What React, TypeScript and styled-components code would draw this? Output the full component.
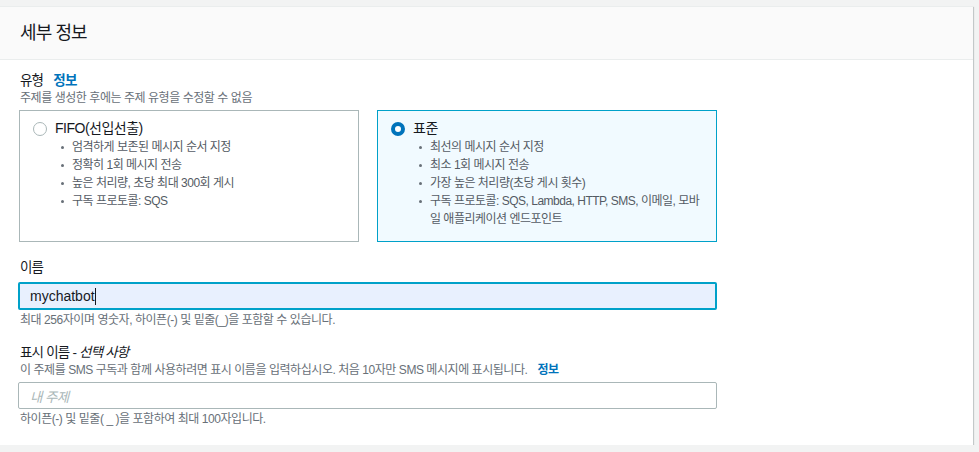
import * as React from 'react';
import styled, { createGlobalStyle } from 'styled-components';

const FONT = `"Liberation Sans", "Noto Sans CJK KR", sans-serif`;

const GlobalStyle = createGlobalStyle`
  body {
    margin: 0;
    background: #f2f3f3;
    font-family: ${FONT};
    color: #16191f;
  }
`;

const Page = styled.div`
  padding: 6px 6px 0 0;
`;

const Card = styled.section`
  background: #fff;
  border-top: 1px solid #eaeded;
  box-shadow: 0 1px 1px 0 rgba(0, 28, 36, 0.3), 1px 1px 1px 0 rgba(0, 28, 36, 0.15),
    -1px 1px 1px 0 rgba(0, 28, 36, 0.15);
`;

const Header = styled.header`
  background: #fafafa;
  border-bottom: 1px solid #eaeded;
  padding: 15px 20px 15px;
`;

const Title = styled.h2`
  margin: 0;
  font-size: 18px;
  font-weight: 400;
  line-height: 22px;
  letter-spacing: -0.9px;
`;

const Body = styled.div`
  padding: 12px 20px 18px 18px;
`;

const Field = styled.div<{ $gap?: number }>`
  margin-top: ${({ $gap }) => $gap || 0}px;
  width: 699px;
`;

const Label = styled.div`
  padding-left: 2px;
  font-size: 13.5px;
  line-height: 18px;
  letter-spacing: -0.8px;
  color: #16191f;

  em {
    font-style: italic;
  }
`;

const Desc = styled.div`
  padding-left: 2px;
  font-size: 12px;
  line-height: 16px;
  letter-spacing: -0.45px;
  color: #687078;
`;

const Info = styled.a`
  margin-left: 10px;
  color: #0073bb;
  font-weight: 700;
  text-decoration: none;
  letter-spacing: -0.6px;
`;

const Tiles = styled.div`
  display: grid;
  grid-template-columns: 1fr 1fr;
  gap: 18px;
  margin-top: 4px;
  padding-left: 1px;
`;

const Tile = styled.div<{ $selected?: boolean }>`
  display: flex;
  gap: 8px;
  height: 132px;
  box-sizing: border-box;
  padding: 8px 12px 0 13px;
  border: 1px solid ${({ $selected }) => ($selected ? '#00a1c9' : '#aab7b8')};
  background: ${({ $selected }) => ($selected ? '#f1faff' : '#fff')};
`;

const Radio = styled.span<{ $checked?: boolean }>`
  flex: none;
  width: 14px;
  height: 14px;
  margin-top: 3px;
  box-sizing: border-box;
  border-radius: 50%;
  background: #fff;
  border: ${({ $checked }) => ($checked ? '4px solid #0073bb' : '1px solid #aab7b8')};
`;

const TileText = styled.div`
  flex: 1;
  min-width: 0;
`;

const TileLabel = styled.div`
  font-size: 14px;
  line-height: 19px;
  letter-spacing: -0.5px;
`;

const List = styled.ul`
  list-style: none;
  margin: 0;
  padding: 0;
`;

const Item = styled.li`
  display: flex;
  font-size: 12px;
  line-height: 18px;
  letter-spacing: -0.5px;
  color: #545b64;
  word-break: break-all;

  &::before {
    content: '';
    flex: none;
    width: 3px;
    height: 3px;
    border-radius: 50%;
    background: #687078;
    margin: 8px 8px 0 6px;
  }
`;

const Input = styled.div<{ $focused?: boolean; $placeholder?: boolean }>`
  display: flex;
  align-items: center;
  box-sizing: border-box;
  height: ${({ $focused }) => ($focused ? 28 : 27)}px;
  margin-top: ${({ $focused }) => ($focused ? 5 : 4)}px;
  padding: 0 ${({ $focused }) => ($focused ? 10 : 11)}px;
  border: ${({ $focused }) => ($focused ? '2px solid #00a1c9' : '1px solid #aab7b8')};
  border-radius: 2px;
  background: ${({ $focused }) => ($focused ? '#e8f0fe' : '#fff')};
  font-size: ${({ $placeholder }) => ($placeholder ? '13.5px' : '14px')};
  font-style: ${({ $placeholder }) => ($placeholder ? 'italic' : 'normal')};
  letter-spacing: ${({ $placeholder }) => ($placeholder ? '-0.6px' : '0')};
  color: ${({ $placeholder }) => ($placeholder ? '#aab7b8' : '#16191f')};
`;

const Caret = styled.span`
  display: inline-block;
  width: 1px;
  height: 17px;
  background: #16191f;
`;

const Hint = styled(Desc)`
  margin-top: 2px;
`;

const tiles = [
  {
    label: 'FIFO(선입선출)',
    items: [
      '엄격하게 보존된 메시지 순서 지정',
      '정확히 1회 메시지 전송',
      '높은 처리량, 초당 최대 300회 게시',
      '구독 프로토콜: SQS',
    ],
  },
  {
    label: '표준',
    selected: true,
    items: [
      '최선의 메시지 순서 지정',
      '최소 1회 메시지 전송',
      '가장 높은 처리량(초당 게시 횟수)',
      '구독 프로토콜: SQS, Lambda, HTTP, SMS, 이메일, 모바일 애플리케이션 엔드포인트',
    ],
  },
];

function App() {
  return (
    <Page>
      <GlobalStyle />
      <Card>
        <Header>
          <Title>세부 정보</Title>
        </Header>
        <Body>
          <Field>
            <Label>
              유형<Info href="#">정보</Info>
            </Label>
            <Desc>주제를 생성한 후에는 주제 유형을 수정할 수 없음</Desc>
            <Tiles>
              {tiles.map((tile) => (
                <Tile $selected={tile.selected} key={tile.label}>
                  <Radio $checked={tile.selected} />
                  <TileText>
                    <TileLabel>{tile.label}</TileLabel>
                    <List>
                      {tile.items.map((item) => (
                        <Item key={item}>{item}</Item>
                      ))}
                    </List>
                  </TileText>
                </Tile>
              ))}
            </Tiles>
          </Field>

          <Field $gap={17}>
            <Label>이름</Label>
            <Input $focused>
              mychatbot
              <Caret />
            </Input>
            <Hint>최대 256자이며 영숫자, 하이픈(-) 및 밑줄(_)을 포함할 수 있습니다.</Hint>
          </Field>

          <Field $gap={16}>
            <Label>
              표시 이름 - <em>선택 사항</em>
            </Label>
            <Desc>
              이 주제를 SMS 구독과 함께 사용하려면 표시 이름을 입력하십시오. 처음 10자만 SMS
              메시지에 표시됩니다.<Info href="#">정보</Info>
            </Desc>
            <Input $placeholder>내 주제</Input>
            <Hint>하이픈(-) 및 밑줄( _ )을 포함하여 최대 100자입니다.</Hint>
          </Field>
        </Body>
      </Card>
    </Page>
  );
}

export default App;
